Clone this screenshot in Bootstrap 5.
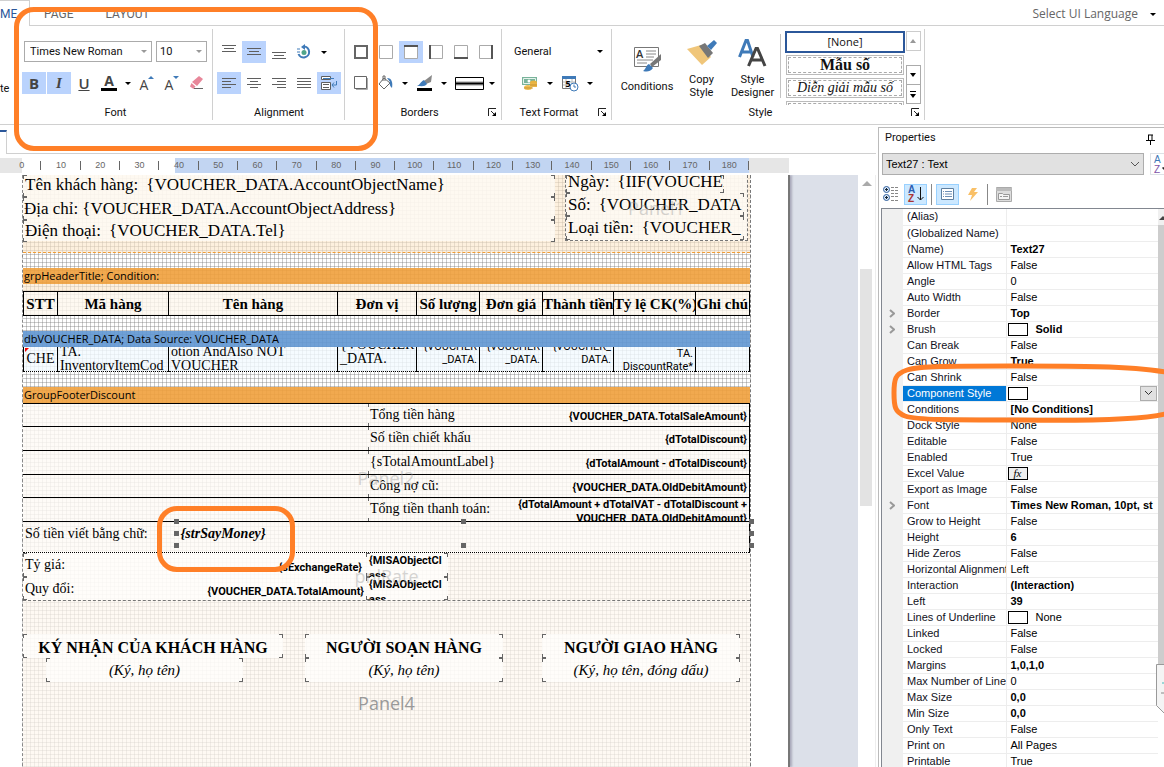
<!DOCTYPE html>
<html lang="vi">
<head>
<meta charset="utf-8">
<meta name="viewport" content="width=device-width, initial-scale=1">
<title>Report Designer</title>
<link href="https://cdn.jsdelivr.net/npm/bootstrap@5.3.0/dist/css/bootstrap.min.css" rel="stylesheet">
<style>
:root { --hi:#bad3fd; --line:#d0d0d0; --mark:#ff7f27; --ink:#5f5f5f; }
body { font:11px/14px Roboto,"Liberation Sans",sans-serif; color:#111; background:#fff; }
button { border:0; background:transparent; padding:0; color:inherit; }
svg { display:block; }
.annot { position:absolute; border:5px solid var(--mark); border-radius:20px; pointer-events:none; z-index:5; }
/* tabs */
.tabs { height:26px; flex:none; font-size:12px; border-bottom:1px solid var(--line); }
.tabs a { color:#666; text-decoration:none; height:26px; padding-top:7px; }
.tabs .current { color:#2b579a; width:30px; border:solid var(--line); border-width:1px 1px 0 0; background:#fff; padding-top:6px; }
.lang { font-family:"Open Sans",sans-serif; color:#666; padding-top:3px; }
/* ribbon */
.ribbon { height:99px; flex:none; border-bottom:1px solid var(--line); }
.grp { padding:15px 4px 0; margin:0; position:relative; }
.grp::after { content:""; position:absolute; right:0; top:3px; height:91px; border-right:1px solid var(--line); }
.tools { height:22px; margin-bottom:9px; gap:1px; }
.tb { width:24px; height:22px; display:flex; align-items:center; justify-content:center; flex:none; }
.on { background:var(--hi); }
.grplabel { margin-top:2px; padding-top:3px; text-align:center; line-height:14px; }
.launch { position:absolute; right:5px; bottom:7px; }
.dd { width:14px; height:22px; display:flex; align-items:center; justify-content:center; }
.dd::after, .caret::after { content:""; border:3px solid transparent; border-top-color:#000; border-bottom:0; }
.combo { position:relative; }
.combo::after { content:""; position:absolute; right:5px; top:9px; border:3px solid transparent; border-top-color:#999; border-bottom:0; pointer-events:none; }
.combo.dark::after { border-top-color:#000; }
.combo select { appearance:none; border:1px solid #ababab; height:21px; width:100%; padding:0 5px; background:#fff; color:#111; }
.glyph { font:bold 15px/20px "Open Sans",sans-serif; color:#444; }
.gal { width:120px; height:74px; overflow:hidden; }
.gal button { display:block; width:118px; height:20px; margin:0 1px 3px; border:1px solid #bbb; outline:1px dashed #aaa; outline-offset:-3px; font:16px/16px "Liberation Serif",serif; }
.gal .none { width:120px; height:22px; margin:0 0 2px; border:2px solid #2b579a; outline:0; font:11px/16px "Open Sans",sans-serif; }
.galscroll { width:15px; }
.galscroll button { width:15px; height:20px; border:1px solid #ababab; display:flex; align-items:center; justify-content:center; }
/* workspace */
.main { min-height:0; }
.doctabs { height:29px; flex:none; border-bottom:1px solid var(--line); }
.doctab { width:7px; height:24px; margin-top:5px; border-top:2px solid #2b579a; border-right:1px solid var(--line); background:#fff; }
.ruler { height:15px; flex:none; margin:4px 0 2px; width:789px; padding-left:2px; background:linear-gradient(90deg,#e6e6e6 22px,#fff 22px 175px,#c2d5f2 175px 749px,#e6e6e6 749px); }
.ruler ol { width:747px; margin:0; padding:0; list-style:none; display:flex; }
.ruler li { flex:1; text-align:center; font:9px/15px "Liberation Sans",sans-serif; color:#666; background:linear-gradient(#666,#666) 100% 50%/1px 9px no-repeat; }
.desk { background:#dce0e9; min-height:0; border-right:1px solid #eee; }
.paper { width:790px; padding-left:22px; background:#fff; border-right:2px solid #777; flex:none; box-shadow:2px 0 2px #aab; }
.vscroll { width:17px; background:#fff; }
.vscroll .thumb { width:12px; height:237px; margin:83px 0 0 2px; background:#e3e3e3; }
.vscroll .up { margin:6px 0 0 4px; border:5px solid transparent; border-bottom-color:#aaa; border-top:0; width:0; }
/* report */
.report { width:729px; border-right:1px dashed #777; border-left:1px dashed #888; font:16px/20px "Liberation Serif",serif; color:#000;
 background:
 repeating-linear-gradient(90deg,transparent 0 3px,rgba(110,110,110,.36) 3px 4px),
 repeating-linear-gradient(transparent 0 3px,rgba(110,110,110,.36) 3px 4px), #fff; }
.tan { background:rgba(251,230,200,.6); }
.beige { background:rgba(253,246,238,.72); }
.pale { background:rgba(254,250,245,.82); }
.white8 { background:rgba(255,254,252,.72); }
.bandcap { height:16px; font:11px/16px "Open Sans",sans-serif; padding-left:1px; background:rgba(239,160,60,.9); }
.bandcap.data { background:rgba(95,150,210,.9); }
.gap15 { height:15px; }
.water { position:absolute; font:18px/24px "Open Sans",sans-serif; color:#999; opacity:.4; left:50%; transform:translate(-50%,-50%); top:50%; pointer-events:none; }
.tick { --c:#666; background-image:
 linear-gradient(var(--c),var(--c)),linear-gradient(var(--c),var(--c)),linear-gradient(var(--c),var(--c)),linear-gradient(var(--c),var(--c)),
 linear-gradient(var(--c),var(--c)),linear-gradient(var(--c),var(--c)),linear-gradient(var(--c),var(--c)),linear-gradient(var(--c),var(--c));
 background-size:4px 1px,1px 4px,4px 1px,1px 4px,4px 1px,1px 4px,4px 1px,1px 4px;
 background-position:0 0,0 0,100% 0,100% 0,0 100%,0 100%,100% 100%,100% 100%; background-repeat:no-repeat; }
.vtick { --c:#666; background:linear-gradient(var(--c),var(--c)) 0 0/1px 3px no-repeat,linear-gradient(var(--c),var(--c)) 0 100%/1px 3px no-repeat; }
.head { height:78px; border-bottom:1px dashed #ef9c36; font-size:17px; }
.cust { width:532px; height:66px; }
.meta { width:183px; height:66px; border:1px dashed #777; border-top:0; margin-left:10px; position:relative; white-space:nowrap; }
.r22 { height:22px; }
.rep { width:100%; table-layout:fixed; border-collapse:collapse; }
.rep th, .rep td { border:1px solid #000; padding:0; overflow:hidden; white-space:nowrap; }
.rep th { height:24px; text-align:center; font:bold 15px/21px "Liberation Serif",serif; padding-top:2px; background:rgba(254,247,238,.8); }
.rep td { height:24px; background:rgba(243,250,255,.8); border-bottom-style:dotted; border-top:0; }
.clip { height:23px; overflow:hidden; display:flex; flex-direction:column; font-size:14px; line-height:14px; padding:0 2px; }
.clip.nar { font:11px/13px Roboto,"Liberation Sans",sans-serif; }
.tot { display:grid; grid-template-columns:345px 1fr; border-bottom:1px solid #000; height:24px; font-size:14px; line-height:22px; }
.tot > :last-child { display:flex; justify-content:space-between; padding:0 2px; min-width:0; white-space:nowrap; }
.tot b, .bn { font:bold 11px/14px Roboto,"Liberation Sans",sans-serif; text-align:right; }
.tot b { padding-top:6px; }
.say { height:31px; border-bottom:1px dotted #000; font-size:14px; line-height:24px; position:relative; }
.grip { position:absolute; width:5px; height:5px; background:#666; }
.rate { height:24px; font-size:14px; line-height:24px; }
.sigs { padding-top:33px; }
.sig { text-align:center; white-space:nowrap; }
.sig strong, .sig em { display:block; height:24px; line-height:28px; }
.sig em { font-size:15px; line-height:24px; margin:0 auto; }
/* properties */
.props { width:286px; flex:none; margin:2px 0 0 2px; border:1px solid #bbb; border-right:0; border-bottom:0; overflow:hidden; font:11px/15px "Liberation Sans",sans-serif; position:relative; }
.ptitle { height:25px; padding:2px 9px 0 6px; font:11px/16px Roboto,sans-serif; }
.psel select { appearance:none; width:262px; flex:none; height:22px; background:#e1e1e1; border:1px solid #adadad; padding:0 3px; color:#000; margin-left:3px; }
.psel { position:relative; }
.psel svg.chev { position:absolute; left:251px; top:8px; }
.pbar { height:33px; padding:8px 0 3px 3px; }
.pbtn { width:23px; height:21px; display:flex; align-items:center; justify-content:center; border:1px solid transparent; }
.pbtn.sel { background:#cce8ff; border-color:#99d1ff; }
.vsep { width:1px; height:21px; background:#888; }
.pgrid { margin-left:2px; border:1px solid #828790; border-width:1px 0 0 1px; }
.ptable { width:276px; table-layout:fixed; border-collapse:collapse; line-height:15px; }
.ptable th, .ptable td { height:16px; padding:0 0 0 4px; border-bottom:1px solid #ededed; white-space:nowrap; overflow:hidden; font-weight:400; color:#000; }
.ptable th { border-right:1px solid #ededed; color:#112; }
.ptable td:first-child { background:#f0f0f0; border-color:#f0f0f0; padding-left:7px; }
.ptable td.b { font-weight:700; }
.ptable th.pick { background:#0078d7; color:#fff; }
.sw { display:inline-block; width:20px; height:13px; border:1px solid #000; vertical-align:top; margin:1px 8px 0 -3px; background:#fff; text-align:center; font:italic 11px/11px "Liberation Serif",serif; }
.sw + span { vertical-align:top; }
.pscroll { width:6px; background:#f0f0f0; }
.pscroll svg { margin:7px 0 5px 1px; }
.pscroll div { height:440px; background:#cdcdcd; }
.drop { float:right; width:17px; height:15px; background:#e1e1e1; border:1px solid #adadad; display:flex; align-items:center; justify-content:center; margin-right:1px; }
</style>
</head>
<body class="vh-100 overflow-hidden d-flex flex-column">

<nav class="tabs d-flex">
  <a class="current" href="#">ME</a>
  <a class="ps-3" style="margin-left:-2px" href="#">PAGE</a>
  <a class="ms-4 ps-2" href="#">LAYOUT</a>
  <button class="lang ms-auto d-flex align-items-center gap-2 pe-2">Select UI Language <span class="caret d-flex ms-1"></span></button>
</nav>

<header class="ribbon d-flex position-relative">
  <div class="pt-5" style="width:18px"><div class="pt-2">te</div></div>
  <section class="grp" style="width:195px">
    <div class="tools gap-1 ps-1">
      <div class="d-flex gap-1">
        <div class="combo" style="width:128px;margin-left:-2px"><select aria-label="Font"><option>Times New Roman</option></select></div>
        <div class="combo" style="width:51px"><select aria-label="Size" style="padding:0 3px"><option>10</option></select></div>
      </div>
    </div>
    <div class="tools d-flex">
      <button class="tb on glyph" aria-label="Bold">B</button>
      <button class="tb on glyph fst-italic" style="font-family:'Liberation Serif'" aria-label="Italic">I</button>
      <button class="tb glyph text-decoration-underline" style="font-weight:600" aria-label="Underline">U</button>
      <button class="tb" aria-label="Font colour"><svg width="16" height="18"><text x="8" y="12" text-anchor="middle" font-family="Open Sans" font-weight="700" font-size="14" fill="#444">A</text><path d="M0 14h16v3H0z"/></svg></button>
      <button class="dd" aria-label="Font colour menu"></button>
      <button class="tb" aria-label="Grow font"><svg width="16" height="18"><text x="5" y="16" text-anchor="middle" font-family="Open Sans" font-size="14" fill="#444">A</text><path d="M9 5l3-3 3 3z" fill="#3f7ab8"/></svg></button>
      <button class="tb" aria-label="Shrink font"><svg width="16" height="18"><text x="5" y="16" text-anchor="middle" font-family="Open Sans" font-size="14" fill="#444">A</text><path d="M9 2l3 3 3-3z" fill="#3f7ab8"/></svg></button>
      <button class="tb" aria-label="Clear"><svg width="16" height="16"><path d="M10 1l4 3-6 7-5-4z" fill="#e8879a"/><path d="M2.500 8l4 3.500-2 2.500-3.500-2.500z" fill="#e8879a"/><path d="M5 13.500h9" stroke="#666"/></svg></button>
    </div>
    <div class="grplabel">Font</div>
  </section>

  <section class="grp" style="width:132px">
    <div class="tools d-flex">
      <button class="tb" aria-label="Top"><svg width="16" height="16" stroke="#5f5f5f"><path d="M1 1.500h14M3 4.500h10M1 7.500h14"/></svg></button>
      <button class="tb on" aria-label="Middle"><svg width="16" height="16" stroke="#5f5f5f"><path d="M1 4.500h14M3 7.500h10M1 10.500h14"/></svg></button>
      <button class="tb" aria-label="Bottom"><svg width="16" height="16" stroke="#5f5f5f"><path d="M1 8.500h14M3 11.500h10M1 14.500h14"/></svg></button>
      <button class="tb" aria-label="Rotate"><svg width="16" height="16"><path d="M8 2.500A5.500 5.500 0 1 1 2.500 10" fill="none" stroke="#3f7ab8" stroke-width="2"/><path d="M9 0v6L5 3z" fill="#3f7ab8"/><circle cx="8" cy="8.500" r="2.500" fill="#4fa58a"/><path d="M1 5h3M1 8h3" stroke="#3f7ab8"/></svg></button>
      <button class="dd" aria-label="Rotate menu"></button>
    </div>
    <div class="tools d-flex">
      <button class="tb on" aria-label="Left"><svg width="16" height="16" stroke="#5f5f5f"><path d="M1 3.500h14M1 6.500h9M1 9.500h14M1 12.500h9"/></svg></button>
      <button class="tb" aria-label="Center"><svg width="16" height="16" stroke="#5f5f5f"><path d="M1 3.500h14M4 6.500h8M1 9.500h14M4 12.500h8"/></svg></button>
      <button class="tb" aria-label="Right"><svg width="16" height="16" stroke="#5f5f5f"><path d="M1 3.500h14M6 6.500h9M1 9.500h14M6 12.500h9"/></svg></button>
      <button class="tb" aria-label="Justify"><svg width="16" height="16" stroke="#5f5f5f"><path d="M1 3.500h14M1 6.500h14M1 9.500h14M1 12.500h14"/></svg></button>
      <button class="tb on" aria-label="Wrap"><svg width="18" height="16" fill="none" stroke="#5f5f5f"><path d="M1.500 1.500h9v3h-9zM1.500 7.500h9v7h-9zM3 9.500h6M3 12.500h6" fill="#fff"/><path d="M3 3.500h11" stroke="#3f7ab8"/><path d="M16.500 6v4h-4M14 7.500l-2 2.500 2 2.500" stroke="#3f7ab8"/></svg></button>
    </div>
    <div class="grplabel">Alignment</div>
  </section>

  <section class="grp" style="width:157px">
    <div class="tools d-flex">
      <button class="tb" aria-label="All borders"><svg width="14" height="14" fill="none"><path d="M1 1h12v12H1z" stroke="#666" stroke-width="2"/></svg></button>
      <button class="tb" aria-label="No border"><svg width="14" height="14" fill="none"><path d="M.5.5h13v13H.5z" stroke="#aaa"/></svg></button>
      <button class="tb on" aria-label="Top border"><svg width="14" height="14" fill="#fff"><path d="M.5.5h13v13H.5z" stroke="#aaa"/><path d="M0 1h14" stroke="#555" stroke-width="2"/></svg></button>
      <button class="tb" aria-label="Left border"><svg width="14" height="14" fill="none"><path d="M.5.5h13v13H.5z" stroke="#aaa"/><path d="M1 0v14" stroke="#555" stroke-width="2"/></svg></button>
      <button class="tb" aria-label="Bottom border"><svg width="14" height="14" fill="none"><path d="M.5.5h13v13H.5z" stroke="#aaa"/><path d="M0 13h14" stroke="#555" stroke-width="2"/></svg></button>
      <button class="tb" aria-label="Right border"><svg width="14" height="14" fill="none"><path d="M.5.5h13v13H.5z" stroke="#aaa"/><path d="M13 0v14" stroke="#555" stroke-width="2"/></svg></button>
    </div>
    <div class="tools d-flex">
      <button class="tb" aria-label="Shadow"><svg width="14" height="14" fill="none"><path d="M.5.500h12v12H.500z" stroke="#666"/><path d="M2 13.500h11.500V2" stroke="#aaa"/></svg></button>
      <button class="tb" aria-label="Fill"><svg width="16" height="16"><path d="M6 3l6 5-6 6-5-5zM5 6V1h2v5" fill="none" stroke="#666"/><path d="M9 3c5 0 6 5 5 10-1-1-3-3-2-6z" fill="#3f7ab8"/></svg></button>
      <button class="dd" aria-label="Fill menu"></button>
      <button class="tb" aria-label="Line colour"><svg width="16" height="17"><path d="M15 0l-1 7-5 2-2-3z" fill="#888"/><path d="M7 5l3 4c-2 3-6 2-10 2 3-1 3-4 7-6z" fill="#3f7ab8"/><path d="M0 13h15v3H0z"/></svg></button>
      <button class="dd" aria-label="Line colour menu"></button>
      <button class="d-flex align-items-center ps-1" aria-label="Line style"><svg width="29" height="13"><path d="M.5.500h28v12H.500z" fill="#fff" stroke="#000"/><path d="M1 4h27v5H1z" fill="#ccc"/><path d="M1 6.500h27" stroke="#000" stroke-width="2"/></svg></button>
      <button class="dd" aria-label="Line style menu"></button>
    </div>
    <div class="grplabel pe-2">Borders</div>
    <svg class="launch" width="9" height="9"><path d="M.5 8V.5H8M3 3l4 4" fill="none" stroke="#222"/><path d="M8 4v4H4z"/></svg>
  </section>

  <section class="grp" style="width:110px">
    <div class="tools"><div class="combo dark"><select class="border-0 ps-2" aria-label="Format"><option>General</option></select></div></div>
    <div class="tools d-flex" style="padding-left:12px">
      <button class="tb" aria-label="Currency"><svg width="18" height="16"><path d="M1 2h15v8H1z" fill="#79b39b"/><path d="M2.500 3.500h12v5h-12z" fill="none" stroke="#e6f3ec"/><circle cx="8" cy="6" r="1.500" fill="#fff"/><ellipse cx="12.500" cy="7.500" rx="3.500" ry="2" fill="#e8b33f"/><path d="M9 8h7v4H9z" fill="#eab548"/><ellipse cx="7" cy="12.500" rx="4" ry="2.500" fill="#efbd52"/><path d="M9 10h7M3 13h9" stroke="#b98524" stroke-width=".7"/></svg></button>
      <button class="dd" aria-label="Currency menu"></button>
      <button class="tb" aria-label="Date"><svg width="17" height="17"><path d="M.5 1.500h13v12H.500z" fill="#fff" stroke="#777"/><path d="M0 1h14v3H0z" fill="#3f7ab8"/><path d="M4 4v9M10 4v9M1 7h12M1 10h12" stroke="#bbb"/><text x="3.500" y="12" font-family="Open Sans" font-weight="700" font-size="9">5</text><circle cx="12" cy="12" r="4" fill="#fff" stroke="#3f7ab8"/><path d="M12 9.500V12h2" stroke="#3f7ab8" fill="none"/></svg></button>
      <button class="dd" aria-label="Date menu"></button>
    </div>
    <div class="grplabel pe-3">Text Format</div>
    <svg class="launch" width="9" height="9"><path d="M.5 8V.5H8M3 3l4 4" fill="none" stroke="#222"/><path d="M8 4v4H4z"/></svg>
  </section>

  <section class="grp pt-0" style="width:313px">
    <div class="d-flex" style="height:80px">
      <button class="d-flex flex-column align-items-center" style="width:62px;padding-top:19px"><svg width="30" height="27"><path d="M2.500 2.500h24v19h-24z" fill="#fff" stroke="#777"/><text x="4" y="13" font-family="Open Sans" font-weight="600" font-size="11" fill="#333">A</text><path d="M14 6h10M14 9h10M14 12h8M5 15h16M5 18h10" stroke="#888"/><path d="M29 9v6l-9 7-2-3z" fill="#777"/><path d="M17 19l4 4c-3 4-6 4-10 3 3-2 3-6 6-7z" fill="#3f7ab8"/></svg><span class="mt-2">Conditions</span></button>
      <button class="d-flex flex-column align-items-center" style="width:47px;padding-top:13px"><svg width="31" height="28"><path d="M1 10l14-4 10 12L16 26z" fill="#f0c67a"/><path d="M13 7l6-3 8 10-5 5z" fill="#777"/><path d="M21 7L28 1l3 3-6 7z" fill="#3f7ab8"/></svg><span style="margin-top:6px;line-height:13px">Copy<br>Style</span></button>
      <button class="d-flex flex-column align-items-center" style="width:55px;padding-top:13px"><svg width="29" height="28" fill="none" stroke-width="3"><path d="M1.500 18L8 1.500h1.500L15 18M4 13h9" stroke="#3f7ab8"/><path d="M10.500 27L18 9.500h1.500L27 27M13.500 21h11" stroke="#444"/></svg><span style="margin-top:6px;line-height:13px">Style<br>Designer</span></button>
      <div class="vr my-2" style="margin:0 4px 0 0"></div>
      <div class="gal" style="margin-top:5px">
        <button class="none">[None]</button>
        <button class="fw-bold">Mẫu số</button>
        <button class="fst-italic" style="font-size:14px">Diễn giải mẫu số</button>
        <button aria-label="Next style"></button>
      </div>
      <div class="galscroll d-flex flex-column" style="margin:5px 0 0 1px">
        <button aria-label="Up" style="border-color:#ccc;margin-bottom:14px"><svg width="7" height="4"><path d="M0 4l3-4 3 4z" fill="#999"/></svg></button>
        <button aria-label="Down"><svg width="7" height="4"><path d="M0 0h6L3 4z"/></svg></button>
        <button aria-label="More" style="margin-top:-1px"><svg width="7" height="7"><path d="M0 0h6v1H0zM0 3h6L3 7z"/></svg></button>
      </div>
    </div>
    <div class="grplabel pe-3 mt-0 pt-0">Style</div>
    <svg class="launch" width="9" height="9"><path d="M.5 8V.5H8M3 3l4 4" fill="none" stroke="#222"/><path d="M8 4v4H4z"/></svg>
  </section>
  <div class="annot" style="left:14px;top:-19px;width:364px;height:144px"></div>
</header>

<main class="main d-flex flex-grow-1">
  <div class="d-flex flex-column flex-grow-1" style="min-width:0">
    <div class="doctabs"><div class="doctab"></div></div>
    <div class="ruler"><ol><li>0</li><li>10</li><li>20</li><li>30</li><li>40</li><li>50</li><li>60</li><li>70</li><li>80</li><li>90</li><li>100</li><li>110</li><li>120</li><li>130</li><li>140</li><li>150</li><li>160</li><li>170</li><li>180</li></ol></div>
    <div class="desk d-flex flex-grow-1 overflow-hidden">
      <div class="paper">
        <div class="report">
          <div class="head tan d-flex">
            <div class="cust pale">
              <div class="d-flex r22 tick gap-2" style="padding-left:2px"><span>Tên khách hàng:</span><span>{VOUCHER_DATA.AccountObjectName}</span></div>
              <div class="d-flex tick gap-1 align-items-center" style="height:23px;padding-left:1px"><span>Địa chỉ:</span><span>{VOUCHER_DATA.AccountObjectAddress}</span></div>
              <div class="d-flex r22 tick gap-2 align-items-center" style="padding-left:2px"><span>Điện thoại:</span><span>{VOUCHER_DATA.Tel}</span></div>
            </div>
            <div class="meta pale">
              <span class="water">Panel1</span>
              <div class="d-flex tick gap-2 overflow-hidden" style="height:18px;padding-left:2px;width:158px;line-height:14px"><span>Ngày:</span><span>{IIF(VOUCHER</span></div>
              <div class="d-flex tick gap-2 align-items-center" style="height:23px;padding-left:2px;width:178px"><span>Số:</span><span>{VOUCHER_DATA</span></div>
              <div class="d-flex tick gap-2 align-items-center" style="height:24px;padding-left:2px;width:178px"><span>Loại tiền:</span><span>{VOUCHER_</span></div>
            </div>
          </div>
          <div class="gap15"></div>
          <div class="bandcap">grpHeaderTitle; Condition:</div>
          <div class="tan" style="height:7px"></div>
          <table class="rep">
            <colgroup><col style="width:34px"><col style="width:111px"><col style="width:169px"><col style="width:79px"><col style="width:63px"><col style="width:63px"><col style="width:71px"><col style="width:82px"><col></colgroup>
            <tr><th>STT</th><th>Mã hàng</th><th>Tên hàng</th><th>Đơn vị</th><th>Số lượng</th><th>Đơn giá</th><th>Thành tiền</th><th>Tỷ lệ CK(%)</th><th>Ghi chú</th></tr>
          </table>
          <div class="gap15"></div>
          <div class="bandcap data">dbVOUCHER_DATA; Data Source: VOUCHER_DATA</div>
          <table class="rep">
            <colgroup><col style="width:34px"><col style="width:111px"><col style="width:169px"><col style="width:79px"><col style="width:63px"><col style="width:63px"><col style="width:71px"><col style="width:82px"><col></colgroup>
            <tr>
              <td><div class="clip position-relative justify-content-center align-items-center"><svg class="position-absolute top-0 start-0" width="5" height="5"><path d="M1 1h4L1 5z" fill="#e00"/></svg>CHE</div></td>
              <td><div class="clip"><span style="margin-top:-2px">TA.</span><span>InventoryItemCod</span></div></td>
              <td><div class="clip"><span style="margin-top:-2px">otion AndAlso NOT</span><span>VOUCHER</span></div></td>
              <td><div class="clip justify-content-end"><span>{VOUCHER</span><span class="mb-1">_DATA.</span></div></td>
              <td><div class="clip nar justify-content-end text-end"><span>{VOUCHER</span><span class="pb-1">_DATA.</span></div></td>
              <td><div class="clip nar justify-content-end text-end"><span>{VOUCHER</span><span class="pb-1">_DATA.</span></div></td>
              <td><div class="clip nar justify-content-end text-end"><span>{VOUCHER_</span><span class="pb-1">DATA.</span></div></td>
              <td><div class="clip nar text-end"><span>TA.</span><span>DiscountRate*</span></div></td>
              <td><div class="clip"></div></td>
            </tr>
          </table>
          <div class="gap15"></div>
          <div class="bandcap">GroupFooterDiscount</div>
          <div class="pale position-relative" style="border:solid #000;border-width:1px 1px 0 0">
            <span class="water">Panel2</span>
            <div class="tot" style="height:23px"><span></span><div class="vtick"><span>Tổng tiền hàng</span><b>{VOUCHER_DATA.TotalSaleAmount}</b></div></div>
            <div class="tot"><span></span><div class="vtick"><span>Số tiền chiết khấu</span><b>{dTotalDiscount}</b></div></div>
            <div class="tot"><span></span><div class="vtick"><span>{sTotalAmountLabel}</span><b>{dTotalAmount - dTotalDiscount}</b></div></div>
            <div class="tot" style="height:23px"><span></span><div class="vtick"><span>Công nợ cũ:</span><b>{VOUCHER_DATA.OldDebitAmount}</b></div></div>
            <div class="tot overflow-hidden"><span></span><div class="vtick" style="height:23px"><span>Tổng tiền thanh toán:</span><b class="pt-0">{dTotalAmount + dTotalVAT - dTotalDiscount +<br>VOUCHER_DATA.OldDebitAmount}</b></div></div>
            <div class="say d-flex">
              <span style="padding-left:2px;width:154px">Số tiền viết bằng chữ:</span><strong class="fst-italic">&nbsp;{strSayMoney}</strong>
              <i class="grip" style="left:151px;top:-3px"></i><i class="grip" style="left:151px;top:9px"></i><i class="grip" style="left:151px;top:21px"></i>
              <i class="grip" style="left:438px;top:-3px"></i><i class="grip" style="left:438px;top:21px"></i>
              <i class="grip" style="left:726px;top:-3px"></i><i class="grip" style="left:726px;top:9px"></i><i class="grip" style="left:726px;top:21px"></i>
              <div class="annot" style="left:134px;top:-16px;width:138px;height:66px"></div>
            </div>
          </div>
          <div class="beige position-relative" style="border-bottom:1px dashed #777">
            <span class="water">pnlRate</span>
            <div class="rate white8 d-flex tick" style="width:425px"><span style="padding-left:2px">Tỷ giá:</span><span class="bn ms-auto pt-2" style="padding-right:4px">{sExchangeRate}</span><div class="bn text-start tick overflow-hidden" style="width:82px;padding-left:3px;line-height:15px">{MISAObjectCl<br>ass</div></div>
            <div class="rate white8 d-flex tick" style="width:425px;height:23px"><span style="padding-left:2px">Quy đổi:</span><span class="bn ms-auto pt-2" style="padding-right:2px">{VOUCHER_DATA.TotalAmount}</span><div class="bn text-start tick overflow-hidden" style="width:82px;padding-left:3px;line-height:15px">{MISAObjectCl<br>ass</div></div>
          </div>
          <div class="beige" style="height:190px">
            <div class="sigs d-flex">
              <div class="sig" style="width:260px"><strong class="white8 tick">KÝ NHẬN CỦA KHÁCH HÀNG</strong><em class="white8 tick" style="width:197px;margin-left:23px">(Ký, họ tên)</em></div>
              <div class="sig" style="width:198px;margin-left:22px"><strong class="white8 tick">NGƯỜI SOẠN HÀNG</strong><em class="white8 tick">(Ký, họ tên)</em></div>
              <div class="sig" style="width:198px;margin-left:39px"><strong class="white8 tick">NGƯỜI GIAO HÀNG</strong><em class="white8 tick">(Ký, họ tên, đóng dấu)</em></div>
            </div>
            <div class="text-center" style="font:18px/24px 'Open Sans',sans-serif;color:#999;margin-top:9px">Panel4</div>
          </div>
        </div>
      </div>
      <div class="flex-grow-1"></div>
      <div class="vscroll"><div class="up"></div><div class="thumb"></div></div>
    </div>
  </div>

  <aside class="props">
    <div class="ptitle d-flex justify-content-between"><span>Properties</span><svg width="9" height="11" class="mt-1"><path d="M2 1h5M2.500 1v5M6 1v5M0 6.500h9M4.500 7v4" stroke="#000" fill="none"/></svg></div>
    <div class="psel d-flex"><select aria-label="Component"><option>Text27 : Text</option></select>
      <svg class="chev" width="10" height="6"><path d="M1 1l4 4 4-4" fill="none" stroke="#555"/></svg>
      <button class="border d-flex flex-shrink-0" style="width:24px;height:22px;margin-left:6px" aria-label="Sort"><svg width="20" height="20"><text x="3" y="9" font-size="10" fill="#3f7ab8">A</text><text x="3" y="19" font-size="10" fill="#8054a8">Z</text><path d="M12 13v2h2" stroke="#333"/></svg></button>
    </div>
    <div class="pbar d-flex align-items-center gap-1">
      <button class="pbtn" style="width:18px" aria-label="Categorized"><svg width="17" height="16" fill="none"><circle cx="3.500" cy="3.500" r="3" stroke="#2d5d9c" fill="#dbe8f7"/><circle cx="3.500" cy="11.500" r="3" stroke="#2d5d9c" fill="#dbe8f7"/><path d="M2 3.500h3M3.500 2v3M2 11.500h3M3.500 10v3" stroke="#123"/><path d="M8 1.500h8M8 4.500h8M8 7.500h8M8 10.500h8M8 14.500h8" stroke="#888" stroke-dasharray="3 1"/></svg></button>
      <button class="pbtn sel" aria-label="Alphabetical"><svg width="18" height="18"><text x="1" y="8" font-size="10" font-weight="700" fill="#2d5db0">A</text><text x="1" y="17" font-size="10" font-weight="700" fill="#a33">Z</text><path d="M13.500 2v13M10.500 12l3 3 3-3" fill="none" stroke="#111"/></svg></button>
      <span class="vsep"></span>
      <button class="pbtn sel" aria-label="Properties"><svg width="13" height="12"><path d="M.5.500h12v11H.500z" fill="#fff" stroke="#5f7f9f"/><path d="M2 3.500h1M4 3.500h7M2 6h1M4 6h7M2 8.500h1M4 8.500h7" stroke="#6d8fb5"/></svg></button>
      <button class="pbtn" style="width:20px" aria-label="Events"><svg width="12" height="15"><path d="M5 1h5L7 5h4L3 14l2-6H1z" fill="#f9c067"/></svg></button>
      <span class="vsep"></span>
      <button class="pbtn" aria-label="Pages"><svg width="16" height="15"><path d="M.5.500h15v14H.500z" fill="#ddd" stroke="#aaa"/><path d="M0 1h16v3H0z" fill="#bbb"/><path d="M2.500 6.500h4l1 1h6v5h-11zM4 9.500h2M7 9.500h5" fill="#f4f4f4" stroke="#999"/></svg></button>
    </div>
    <div class="pgrid d-flex align-items-start">
      <table class="ptable">
        <colgroup><col style="width:21px"><col style="width:103px"><col></colgroup>
        <tr><td></td><th>(Alias)</th><td></td></tr>
        <tr><td></td><th>(Globalized Name)</th><td></td></tr>
        <tr><td></td><th>(Name)</th><td class="b">Text27</td></tr>
        <tr><td></td><th>Allow HTML Tags</th><td>False</td></tr>
        <tr><td></td><th>Angle</th><td>0</td></tr>
        <tr><td></td><th>Auto Width</th><td>False</td></tr>
        <tr><td><svg width="6" height="9"><path d="M1 1l4 3.500-4 3.500" fill="none" stroke="#999" stroke-width="2"/></svg></td><th>Border</th><td class="b">Top</td></tr>
        <tr><td><svg width="6" height="9"><path d="M1 1l4 3.500-4 3.500" fill="none" stroke="#999" stroke-width="2"/></svg></td><th>Brush</th><td class="b"><i class="sw"></i><span>Solid</span></td></tr>
        <tr><td></td><th>Can Break</th><td>False</td></tr>
        <tr><td></td><th>Can Grow</th><td class="b">True</td></tr>
        <tr><td></td><th>Can Shrink</th><td>False</td></tr>
        <tr><td></td><th class="pick">Component Style</th><td><button class="drop" aria-label="Choose style"><svg width="9" height="6"><path d="M1 1l3.500 3.500L8 1" fill="none" stroke="#333"/></svg></button><i class="sw"></i></td></tr>
        <tr><td></td><th>Conditions</th><td class="b">[No Conditions]</td></tr>
        <tr><td></td><th>Dock Style</th><td>None</td></tr>
        <tr><td></td><th>Editable</th><td>False</td></tr>
        <tr><td></td><th>Enabled</th><td>True</td></tr>
        <tr><td></td><th>Excel Value</th><td><i class="sw" style="background:#eee">fx</i></td></tr>
        <tr><td></td><th>Export as Image</th><td>False</td></tr>
        <tr><td><svg width="6" height="9"><path d="M1 1l4 3.500-4 3.500" fill="none" stroke="#999" stroke-width="2"/></svg></td><th>Font</th><td class="b">Times New Roman, 10pt, st</td></tr>
        <tr><td></td><th>Grow to Height</th><td>False</td></tr>
        <tr><td></td><th>Height</th><td class="b">6</td></tr>
        <tr><td></td><th>Hide Zeros</th><td>False</td></tr>
        <tr><td></td><th>Horizontal Alignment</th><td>Left</td></tr>
        <tr><td></td><th>Interaction</th><td class="b">(Interaction)</td></tr>
        <tr><td></td><th>Left</th><td class="b">39</td></tr>
        <tr><td></td><th>Lines of Underline</th><td><i class="sw"></i><span>None</span></td></tr>
        <tr><td></td><th>Linked</th><td>False</td></tr>
        <tr><td></td><th>Locked</th><td>False</td></tr>
        <tr><td></td><th>Margins</th><td class="b">1,0,1,0</td></tr>
        <tr><td></td><th>Max Number of Lines</th><td>0</td></tr>
        <tr><td></td><th>Max Size</th><td class="b">0,0</td></tr>
        <tr><td></td><th>Min Size</th><td class="b">0,0</td></tr>
        <tr><td></td><th>Only Text</th><td>False</td></tr>
        <tr><td></td><th>Print on</th><td>All Pages</td></tr>
        <tr><td></td><th>Printable</th><td>True</td></tr>
      </table>
      <div class="pscroll"><svg width="5" height="4"><path d="M0 4l4-4 4 4z" fill="#444"/></svg><div></div></div>
    </div>
    <svg style="position:absolute;right:0;top:235px;z-index:5" width="275" height="62" fill="none"><path d="M276 9C240 3 190 3 120 3C60 3 30 3 18 7C6 11 5 16 5 30C5 44 6 49 16 53C28 57 60 57 130 57C200 58 250 57 276 51" stroke="#ff7f27" stroke-width="5"/></svg>
    <svg style="position:absolute;right:0;top:536px" width="8" height="50"><path d="M8 .5H.500v41L8 49" fill="#f4f4f4" stroke="#999"/><path d="M6 19h2" stroke="#4bb"/><path d="M5 29h3" stroke="#888"/></svg>
  </aside>
</main>
<script src="https://cdn.jsdelivr.net/npm/bootstrap@5.3.0/dist/js/bootstrap.bundle.min.js"></script>
</body>
</html>
